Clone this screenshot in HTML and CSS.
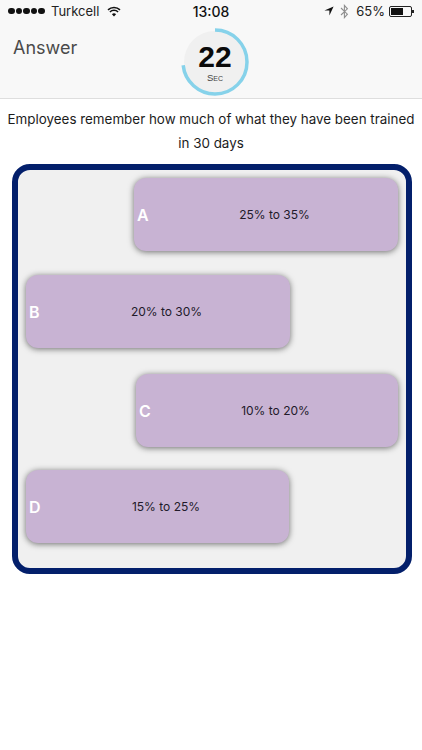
FILE: index.html
```html
<!DOCTYPE html>
<html lang="en">
<head>
<meta charset="utf-8">
<title>Answer</title>
<link rel="stylesheet" href="styles.css">
</head>
<body>
<header class="top">
  <div class="status">
    <div class="status-left">
      <span class="dots"><i></i><i></i><i></i><i></i><i></i></span>
      <span>Turkcell</span>
      <svg class="wifi" viewBox="0 0 14 11" width="14" height="11"><path d="M7 10.6 4.9 8.2a3 3 0 0 1 4.2 0z" fill="#111"/><path d="M1 3.9a8.6 8.6 0 0 1 12 0M2.9 6a5.9 5.9 0 0 1 8.2 0" fill="none" stroke="#111" stroke-width="1.5"/></svg>
    </div>
    <div class="status-time">13:08</div>
    <div class="status-right">
      <svg class="loc" viewBox="0 0 10 10" width="10" height="10"><path d="M9.6.4.4 4.6h5v5z" fill="#111"/></svg>
      <svg class="bt" viewBox="0 0 9 15" width="9" height="15"><path d="M1 4 7.4 10.2 4.4 13.6V1.4l3 3.4L1 11" fill="none" stroke="#8e8e8e" stroke-width="1.1"/></svg>
      <span class="pct">65%</span>
      <span class="battery"><span class="battery-level"></span></span>
    </div>
  </div>
  <div class="nav">
    <h1 class="title">Answer</h1>
    <div class="timer">
      <svg class="ring" viewBox="0 0 68 68" width="68" height="68">
        <circle cx="34" cy="34" r="31" fill="#f0f0f0"/>
        <circle class="ring-arc" cx="34" cy="34" r="32" pathLength="30" transform="rotate(-90 34 34)"/>
      </svg>
      <div class="timer-text">
        <span class="timer-num">22</span>
        <span class="timer-unit">Sec</span>
      </div>
    </div>
  </div>
</header>
<p class="question">Employees remember how much of what they have been trained in 30 days</p>
<main class="board">
  <div class="row row-a"><button class="opt opt-a"><span class="key">A</span>25% to 35%</button></div>
  <div class="row row-b"><button class="opt opt-b"><span class="key">B</span>20% to 30%</button></div>
  <div class="row row-c"><button class="opt opt-c"><span class="key">C</span>10% to 20%</button></div>
  <div class="row row-d"><button class="opt opt-d"><span class="key">D</span>15% to 25%</button></div>
</main>
</body>
</html>
```
FILE: styles.css
```css
* { box-sizing: border-box; }
html, body { margin: 0; padding: 0; }
body {
  width: 422px;
  height: 750px;
  overflow: hidden;
  background: #fff;
  font-family: Inter, Roboto, "Liberation Sans", sans-serif;
  color: #111;
}
.top {
  height: 99px;
  background: #f8f8f8;
  border-bottom: 1px solid #dedede;
}
.status {
  height: 20px;
  padding: 2px 8px 0 8px;
  display: grid;
  grid-template-columns: 1fr auto 1fr;
  align-items: center;
  font-size: 13px;
  color: #222;
}
.status-left { display: flex; align-items: center; gap: 6px; }
.dots { display: flex; gap: 1px; }
.dots i { width: 6.6px; height: 6.6px; border-radius: 50%; background: #111; display: block; }
.wifi { margin-left: 2px; }
.status-time { font-weight: 500; font-size: 14px; color: #111; }
.status-right { display: flex; align-items: center; justify-content: flex-end; gap: 6px; }
.pct { margin-left: 1px; margin-right: -2px; }
.battery {
  position: relative;
  width: 23px;
  height: 11px;
  border: 1px solid #222;
  border-radius: 2px;
  padding: 1px;
  display: block;
  margin-right: 2px;
}
.battery::after {
  content: "";
  position: absolute;
  right: -3px;
  top: 3px;
  width: 2px;
  height: 3px;
  background: #222;
}
.battery-level { display: block; width: 65%; height: 100%; background: #111; }
.nav {
  height: 78px;
  display: grid;
  grid-template-columns: 168px auto;
  padding-left: 13px;
}
.title {
  margin: 17px 0 0;
  font-size: 18px;
  line-height: 22px;
  font-weight: 400;
  color: #4a4a4a;
}
.timer {
  position: relative;
  width: 68px;
  height: 68px;
  margin-top: 8px;
}
.ring { display: block; }
.ring-arc {
  fill: none;
  stroke: #86d2ea;
  stroke-width: 3.5;
  stroke-dasharray: 22 8;
}
.timer-text {
  position: absolute;
  inset: 0;
  display: flex;
  flex-direction: column;
  align-items: center;
  padding-top: 17px;
}
.timer-num {
  font-family: "Liberation Sans", sans-serif;
  font-size: 30px;
  line-height: 24px;
  font-weight: 700;
  color: #0a0a0a;
}
.timer-unit {
  font-family: "Liberation Sans", sans-serif;
  font-size: 9.5px;
  line-height: 9px;
  margin-top: 4px;
  font-variant: small-caps;
  color: #444;
}
.question {
  margin: 8px 0 0;
  padding: 0 5px;
  text-align: center;
  font-size: 13.4px;
  line-height: 24px;
  color: #1c1c1c;
}
.board {
  width: 400px;
  height: 410px;
  margin: 9px 0 0 12px;
  border: 6px solid #031f6b;
  border-radius: 18px;
  background: #f0f0f0;
  padding: 8px 8px 0 8px;
  display: flex;
  flex-direction: column;
}
.row { display: flex; height: 73px; }
.row-a, .row-c { justify-content: flex-end; }
.row-b { margin-top: 24px; }
.row-c { margin-top: 26px; }
.row-d { margin-top: 23px; }
.opt {
  position: relative;
  height: 73px;
  border: 0;
  border-radius: 12px;
  background: #c8b3d3;
  box-shadow: 0 1px 6px rgba(0, 0, 0, .55);
  font: inherit;
  font-size: 12px;
  color: #221a2a;
  display: flex;
  align-items: center;
  justify-content: center;
  padding: 0 0 0 17px;
}
.opt-a { width: 264px; }
.opt-b { width: 264px; }
.opt-c { width: 262px; }
.opt-d { width: 263px; }
.key {
  position: absolute;
  left: 3px;
  top: 50%;
  transform: translateY(-50%);
  color: #fff;
  font-size: 16px;
  font-weight: 600;
}
```
